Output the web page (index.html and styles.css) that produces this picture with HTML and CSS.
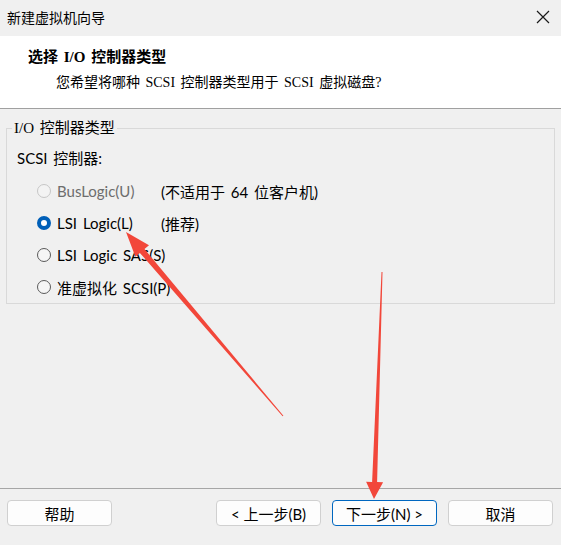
FILE: index.html
```html
<!DOCTYPE html>
<html>

<head>
    <title>新建虚拟机向导</title>
    <link rel="stylesheet" href="styles.css">
</head>

<body>
    <div class="window">
        <div class="titlebar">
            <span class="title">新建虚拟机向导</span>
            <svg class="close" width="14" height="14" viewBox="0 0 14 14">
                <path d="M1 1L13 13M13 1L1 13" stroke="#1a1a1a" stroke-width="1.2" fill="none" />
            </svg>
        </div>

        <div class="header">
            <div class="header-title">选择 I/O 控制器类型</div>
            <div class="header-sub">您希望将哪种 SCSI 控制器类型用于 SCSI 虚拟磁盘?</div>
        </div>

        <div class="main">
            <fieldset class="group">
                <legend>I/O 控制器类型</legend>
                <div class="group-label">SCSI 控制器:</div>
                <div class="option disabled">
                    <span class="radio"></span>
                    <span class="option-name">BusLogic(U)</span>
                    <span class="option-note">(不适用于 64 位客户机)</span>
                </div>
                <div class="option">
                    <span class="radio checked"></span>
                    <span class="option-name">LSI Logic(L)</span>
                    <span class="option-note">(推荐)</span>
                </div>
                <div class="option">
                    <span class="radio"></span>
                    <span class="option-name">LSI Logic SAS(S)</span>
                </div>
                <div class="option">
                    <span class="radio"></span>
                    <span class="option-name">准虚拟化 SCSI(P)</span>
                </div>
            </fieldset>
        </div>

        <div class="footer">
            <button class="btn">帮助</button>
            <div class="spacer"></div>
            <button class="btn">&lt; 上一步(B)</button>
            <button class="btn default">下一步(N) &gt;</button>
            <button class="btn">取消</button>
        </div>

        <!-- 注釈の矢印 -->
        <svg class="marks" width="561" height="545" viewBox="0 0 561 545">
            <polygon fill="#f2473a"
                points="283.4,415.7 144.5,249.1 149.0,245.2 126,232 135.4,256.8 139.9,252.9 282.6,416.3" />
            <polygon fill="#f2473a"
                points="382.5,272 377.1,482.1 383.1,482.3 374,499 366.1,481.7 372.1,481.9 381.5,272" />
        </svg>
    </div>
</body>

</html>
```

FILE: styles.css
```css
body {
    margin: 0;
    background: #f0f0f0;
    font-family: Lato, 'Noto Sans CJK SC', sans-serif;
    font-size: 15px;
    color: #000000;
}

.window {
    position: relative;
    width: 561px;
    height: 545px;
    display: flex;
    flex-direction: column;
    overflow: hidden;
}

.titlebar {
    height: 36px;
    display: flex;
    align-items: center;
    justify-content: space-between;
    padding: 0 11px 0 7px;
    background: #f0f0f0;
}

.title {
    font-family: 'Noto Sans CJK SC', sans-serif;
    font-size: 14px;
    margin-top: -2px;
}

.close {
    margin-top: -2px;
}

.header {
    background: #ffffff;
    border-bottom: 1px solid #a0a0a0;
    padding: 11px 0 0 28px;
    box-sizing: border-box;
    height: 73px;
}

.header-title {
    font-family: 'Liberation Serif', 'Noto Sans CJK SC', serif;
    font-weight: bold;
    font-size: 15px;
    line-height: 20px;
    word-spacing: 2px;
}

.header-sub {
    font-family: 'Liberation Serif', 'Noto Sans CJK SC', serif;
    font-size: 14px;
    line-height: 20px;
    margin: 6px 0 0 28px;
    word-spacing: 2px;
}

.main {
    flex: 1;
}

.group {
    margin: 9px 6px 0 6px;
    padding: 0 10px 0 10px;
    border: 1px solid #d9d9d9;
}

.group legend {
    font-family: 'Liberation Serif', 'Noto Sans CJK SC', serif;
    font-size: 15px;
    line-height: 20px;
    padding: 0 2px;
    margin-left: -5px;
    word-spacing: 2px;
}

.group-label {
    line-height: 20px;
    margin-top: 10px;
    margin-bottom: 7px;
    word-spacing: 2px;
}

.option {
    height: 32px;
    display: flex;
    align-items: center;
    padding-left: 20px;
    white-space: nowrap;
    word-spacing: 2px;
}

.radio {
    flex: none;
    width: 14px;
    height: 14px;
    border: 1px solid #5a5a5a;
    border-radius: 50%;
    background: #f5f5f5;
    box-sizing: border-box;
    margin-right: 6px;
}

.radio.checked {
    border: 4px solid #005fb8;
    background: #ffffff;
}

.disabled .radio {
    border-color: #c6c6c6;
    background: #f3f3f3;
}

.disabled .option-name {
    color: #6d6d6d;
}

.option-name {
    min-width: 104px;
}

.footer {
    height: 45px;
    border-top: 1px solid #a6a6a6;
    display: flex;
    align-items: flex-start;
    padding: 11px 8px 0 7px;
    gap: 11px;
}

.spacer {
    flex: 1;
}

.btn {
    width: 105px;
    height: 26px;
    background: #fdfdfd;
    border: 1px solid #d0d0d0;
    border-radius: 4px;
    font-family: Lato, 'Noto Sans CJK SC', sans-serif;
    font-size: 15px;
    color: #000000;
    padding: 0;
}

.btn.default {
    border-color: #0067c0;
}

.marks {
    position: absolute;
    left: 0;
    top: 0;
    pointer-events: none;
}
```
